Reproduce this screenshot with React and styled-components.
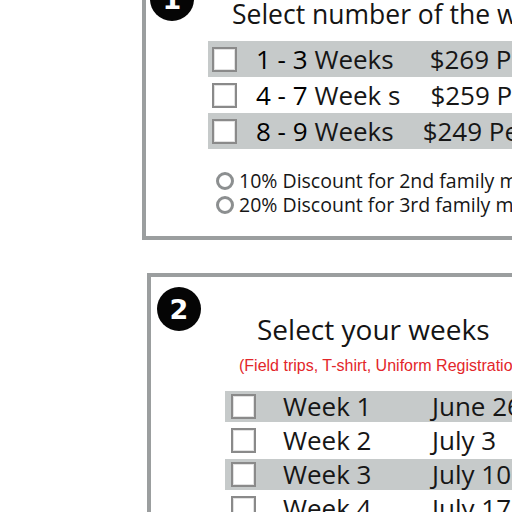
import React from "react";
import styled, { createGlobalStyle } from "styled-components";

const GlobalStyle = createGlobalStyle`
  html, body { margin: 0; padding: 0; background: #fff; }
  body { font-family: "Open Sans", "Noto Sans", sans-serif; color: #161616; }
`;

const Page = styled.div`
  width: 512px;
  height: 512px;
  overflow: hidden;
  box-sizing: border-box;
  padding-left: 142px;
  display: flex;
  flex-direction: column;
  gap: 33px;
`;

const Panel = styled.section`
  flex: none;
  width: 560px;
  box-sizing: border-box;
  border: 4px solid #9b9e9f;
  margin-top: ${(p) => p.$top || 0}px;
  margin-left: ${(p) => p.$shift || 0}px;
  padding: ${(p) => p.$pad};
`;

const Header = styled.div`
  display: flex;
  align-items: flex-start;
  gap: ${(p) => p.$gap}px;
`;

const Badge = styled.div`
  flex: none;
  width: 44px;
  height: 44px;
  border-radius: 50%;
  background: #050505;
  color: #fff;
  display: flex;
  align-items: center;
  justify-content: center;
  font-family: "DejaVu Sans", sans-serif;
  font-weight: 700;
  font-size: 27px;
  line-height: 1;
`;

const Title = styled.h2`
  margin: ${(p) => p.$top}px 0 0;
  font-size: ${(p) => p.$size}px;
  font-weight: 400;
  line-height: 36px;
  white-space: nowrap;
  color: #141414;
`;

const PriceList = styled.div`
  margin: 9px 0 0 58px;
  display: flex;
  flex-direction: column;
`;

const PriceRow = styled.div`
  height: 36px;
  display: flex;
  align-items: center;
  padding-left: 4px;
  background: ${(p) => (p.$shaded ? "#c6caca" : "transparent")};
  font-size: 26px;
  line-height: 36px;
  white-space: nowrap;
`;

const Box = styled.span`
  flex: none;
  width: 25px;
  height: 25px;
  box-sizing: border-box;
  border: 2px solid #8a8a8a;
  box-shadow: inset 0 0 0 1px #e2e2e2;
  background: #fff;
  margin-right: ${(p) => p.$gap}px;
`;

const Range = styled.span`
  font-weight: 500;
  color: #000;
`;

const Price = styled.span`
  margin-left: ${(p) => p.$gap}px;
`;

const DiscountList = styled.div`
  margin: 20px 0 0 66px;
  display: flex;
  flex-direction: column;
`;

const Discount = styled.div`
  display: flex;
  align-items: center;
  gap: 5px;
  height: 24px;
  font-size: 19.5px;
  line-height: 24px;
  white-space: nowrap;
`;

const Radio = styled.span`
  flex: none;
  width: 18px;
  height: 18px;
  box-sizing: border-box;
  border-radius: 50%;
  border: 3px solid #8c8f90;
  background: #fff;
`;

const Note = styled.p`
  margin: 9px 0 0 82px;
  font-family: "Liberation Sans", Arial, sans-serif;
  font-size: 16px;
  line-height: 20px;
  color: #e3262a;
  white-space: nowrap;
`;

const WeekList = styled.div`
  margin: 15px 0 0 68px;
  display: flex;
  flex-direction: column;
  gap: 3px;
`;

const WeekRow = styled.div`
  height: 31px;
  display: flex;
  align-items: center;
  padding-left: 6px;
  background: ${(p) => (p.$shaded ? "#c6caca" : "transparent")};
  font-size: 26px;
  line-height: 31px;
  white-space: nowrap;
`;

const WeekName = styled.span`
  flex: none;
  width: 149px;
`;

const prices = [
  { range: "1 - 3", unit: "Weeks", price: "$269 Per Week", gap: 36 },
  { range: "4 - 7", unit: "Week s", price: "$259 Per Week", gap: 30 },
  { range: "8 - 9", unit: "Weeks", price: "$249 Per Week", gap: 29 },
];

const weeks = [
  ["Week 1", "June 26"],
  ["Week 2", "July 3"],
  ["Week 3", "July 10"],
  ["Week 4", "July 17"],
  ["Week 5", "July 24"],
];

export default function App() {
  return (
    <>
      <GlobalStyle />
      <Page>
        <Panel $top={-40} $pad="13px 0 19px 4px">
          <Header $gap={38}>
            <Badge>1</Badge>
            <Title $top={19} $size={26.5}>Select number of the weeks</Title>
          </Header>
          <PriceList>
            {prices.map((p, i) => (
              <PriceRow key={p.range} $shaded={i % 2 === 0}>
                <Box $gap={19} />
                <span>
                  <Range>{p.range}</Range> {p.unit}
                </span>
                <Price $gap={p.gap}>{p.price}</Price>
              </PriceRow>
            ))}
          </PriceList>
          <DiscountList>
            <Discount>
              <Radio />
              10% Discount for 2nd family members
            </Discount>
            <Discount>
              <Radio />
              20% Discount for 3rd family members
            </Discount>
          </DiscountList>
        </Panel>
        <Panel $shift={5} $pad="10px 0 40px 6px">
          <Header $gap={56}>
            <Badge>2</Badge>
            <Title $top={24} $size={28}>Select your weeks</Title>
          </Header>
          <Note>(Field trips, T-shirt, Uniform Registration fees included)</Note>
          <WeekList>
            {weeks.map(([name, date], i) => (
              <WeekRow key={name} $shaded={i % 2 === 0}>
                <Box $gap={27} />
                <WeekName>{name}</WeekName>
                <span>{date}</span>
              </WeekRow>
            ))}
          </WeekList>
        </Panel>
      </Page>
    </>
  );
}
